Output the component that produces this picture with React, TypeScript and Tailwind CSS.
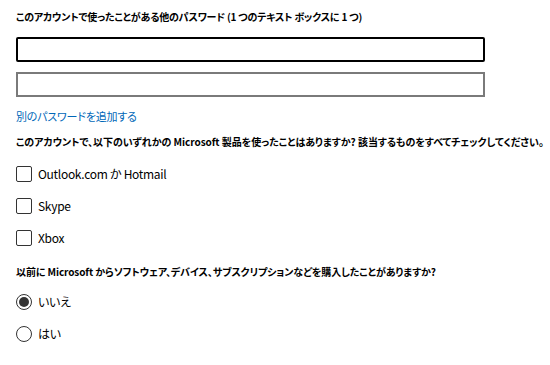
import React from 'react';

const font = "font-['Segoe_UI','Noto_Sans_CJK_JP',sans-serif] [font-feature-settings:'palt']";

const Check: React.FC<{ label: string }> = ({ label }) => (
  <label className="flex items-center h-4 gap-[6px]">
    <span className="w-4 h-4 border border-[#333] rounded-[2px] bg-white" />
    <span className="text-[12px] text-black leading-none tracking-[-0.3px]">{label}</span>
  </label>
);

const Radio: React.FC<{ label: string; checked?: boolean }> = ({ label, checked }) => (
  <label className="flex items-center h-4 gap-[6px]">
    <span className="w-4 h-4 rounded-full border border-[#333] bg-white flex items-center justify-center">
      {checked && <span className="w-[10px] h-[10px] rounded-full bg-[#333]" />}
    </span>
    <span className="text-[12px] text-black leading-none tracking-[-0.3px]">{label}</span>
  </label>
);

export default function App() {
  return (
    <div className={`${font} w-[550px] h-[365px] bg-white pl-4 pt-[10px] text-black`}>
      <p className="text-[10px] font-semibold leading-[13px] tracking-[-0.2px]">
        このアカウントで使ったことがある他のパスワード (1 つのテキスト ボックスに 1 つ)
      </p>
      <div className="mt-[14px] w-[469px] h-[25px] border-2 border-black rounded-[2px]" />
      <div className="mt-[10px] w-[469px] h-[25px] border-2 border-[#7a7a7a]" />
      <a className="block mt-[12px] text-[11px] leading-[14px] text-[#0067b8] tracking-[-0.2px]">別のパスワードを追加する</a>
      <p className="mt-[12px] text-[10px] font-semibold leading-[13px] tracking-[-0.05px] whitespace-nowrap">
        このアカウントで、以下のいずれかの Microsoft 製品を使ったことはありますか? 該当するものをすべてチェックしてください。
      </p>
      <div className="mt-[18px] flex flex-col gap-4">
        <Check label="Outlook.com か Hotmail" />
        <Check label="Skype" />
        <Check label="Xbox" />
      </div>
      <p className="mt-[19px] text-[10px] font-semibold leading-[13px] tracking-[-0.1px]">
        以前に Microsoft からソフトウェア、デバイス、サブスクリプションなどを購入したことがありますか?
      </p>
      <div className="mt-[16px] flex flex-col gap-4">
        <Radio label="いいえ" checked />
        <Radio label="はい" />
      </div>
    </div>
  );
}
